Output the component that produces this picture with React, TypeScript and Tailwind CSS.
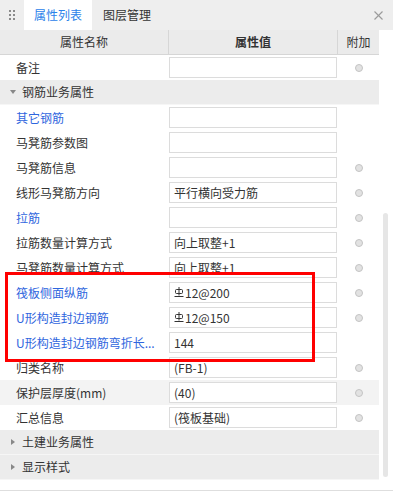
import React from 'react'

type Row =
  | { kind: 'group'; label: string; open: boolean }
  | { kind: 'item'; label: string; value?: string; link?: boolean; radio?: boolean; rebar?: boolean; hover?: boolean }

const rows: Row[] = [
  { kind: 'item', label: '备注', radio: true },
  { kind: 'group', label: '钢筋业务属性', open: true },
  { kind: 'item', label: '其它钢筋', link: true },
  { kind: 'item', label: '马凳筋参数图' },
  { kind: 'item', label: '马凳筋信息', radio: true },
  { kind: 'item', label: '线形马凳筋方向', value: '平行横向受力筋', radio: true },
  { kind: 'item', label: '拉筋', link: true, radio: true },
  { kind: 'item', label: '拉筋数量计算方式', value: '向上取整+1', radio: true },
  { kind: 'item', label: '马凳筋数量计算方式', value: '向上取整+1', radio: true },
  { kind: 'item', label: '筏板侧面纵筋', value: '12@200', link: true, radio: true, rebar: true },
  { kind: 'item', label: 'U形构造封边钢筋', value: '12@150', link: true, radio: true, rebar: true },
  { kind: 'item', label: 'U形构造封边钢筋弯折长...', value: '144', link: true },
  { kind: 'item', label: '归类名称', value: '(FB-1)', radio: true },
  { kind: 'item', label: '保护层厚度(mm)', value: '(40)', radio: true, hover: true },
  { kind: 'item', label: '汇总信息', value: '(筏板基础)', radio: true },
  { kind: 'group', label: '土建业务属性', open: false },
  { kind: 'group', label: '显示样式', open: false },
]

function RebarMark() {
  // HRB400 steel grade symbol
  return (
    <svg width="10" height="11" viewBox="0 0 10 11" className="mr-px shrink-0" fill="none" stroke="#333" strokeWidth="1">
      <line x1="5" y1="0" x2="5" y2="8.5" />
      <rect x="1.5" y="2.5" width="7" height="4" rx="1" />
      <line x1="0.5" y1="9.5" x2="9.5" y2="9.5" />
    </svg>
  )
}

function GroupRow({ label, open }: { label: string; open: boolean }) {
  return (
    <div className="flex h-[25px] items-center border-b border-[#f6f6f6] bg-[#ececec] pl-[10px]">
      {open ? (
        <span className="mr-[6px] h-0 w-0 border-x-[3px] border-t-[4px] border-x-transparent border-t-[#888]" />
      ) : (
        <span className="ml-px mr-[7px] h-0 w-0 border-y-[3px] border-l-[4px] border-y-transparent border-l-[#888]" />
      )}
      <span className="text-[12px] text-[#333]">{label}</span>
    </div>
  )
}

function ItemRow({ row }: { row: Extract<Row, { kind: 'item' }> }) {
  return (
    <div className={`grid h-[25px] grid-cols-[169px_169px_41px] items-center ${row.hover ? 'bg-[#f3f3f3]' : 'bg-white'}`}>
      <div className={`truncate pl-4 text-[12px] ${row.link ? 'text-[#2f66de]' : 'text-[#333]'}`}>{row.label}</div>
      <div className="flex h-[21px] w-[168px] items-center border border-[#dcdcdc] bg-white pl-[4px] text-[12px] text-[#333]">
        {row.rebar && <RebarMark />}
        {row.value}
      </div>
      <div className="flex justify-center">
        {row.radio && <span className="h-2 w-2 rounded-full border border-[#c4c4c4] bg-[#e2e2e2]" />}
      </div>
    </div>
  )
}

export default function App() {
  return (
    <div className="relative h-[491px] w-[393px] overflow-hidden border-b border-[#dedede] bg-white font-['Noto_Sans_CJK_SC','Noto_Sans',sans-serif]">
      {/* tab strip */}
      <div className="flex h-[30px] items-stretch bg-[#eeeeee]">
        <div className="grid w-[24px] place-items-center">
          <div className="grid grid-cols-2 gap-x-[2px] gap-y-[2px]">
            {[0, 1, 2, 3, 4, 5].map((i) => (
              <span key={i} className="h-[2px] w-[2px] bg-[#8a8a8a]" />
            ))}
          </div>
        </div>
        <div className="flex w-[68px] items-center justify-center bg-white text-[12px] text-[#2b82ea]">属性列表</div>
        <div className="flex items-center pl-[11px] text-[12px] text-[#333]">图层管理</div>
        <div className="ml-auto flex items-center pr-[10px]">
          <svg width="9" height="9" viewBox="0 0 9 9" stroke="#9a9a9a" strokeWidth="1.1">
            <line x1="0.5" y1="0.5" x2="8.5" y2="8.5" />
            <line x1="8.5" y1="0.5" x2="0.5" y2="8.5" />
          </svg>
        </div>
      </div>

      <div className="flex">
        <div className="w-[379px]">
          {/* column header */}
          <div className="grid h-[25px] grid-cols-[169px_169px_41px] border-b border-[#d6d6d6] bg-[#ebebeb] text-[12px] text-[#333]">
            <div className="flex items-center justify-center border-r border-[#d6d6d6]">属性名称</div>
            <div className="flex items-center justify-center border-r border-[#d6d6d6] font-bold">属性值</div>
            <div className="flex items-center justify-center">附加</div>
          </div>
          {rows.map((r, i) =>
            r.kind === 'group' ? <GroupRow key={i} label={r.label} open={r.open} /> : <ItemRow key={i} row={r} />,
          )}
        </div>
        {/* scroll gutter */}
        <div className="flex-1 pl-[4px]">
          <div className="mt-[183px] h-[264px] w-[5px] rounded-sm bg-[#e6e6e6]" />
        </div>
      </div>

      {/* highlight frame */}
      <div className="pointer-events-none absolute left-[5px] top-[272px] h-[90px] w-[310px] border-[3px] border-[#ff0000]" />
    </div>
  )
}
